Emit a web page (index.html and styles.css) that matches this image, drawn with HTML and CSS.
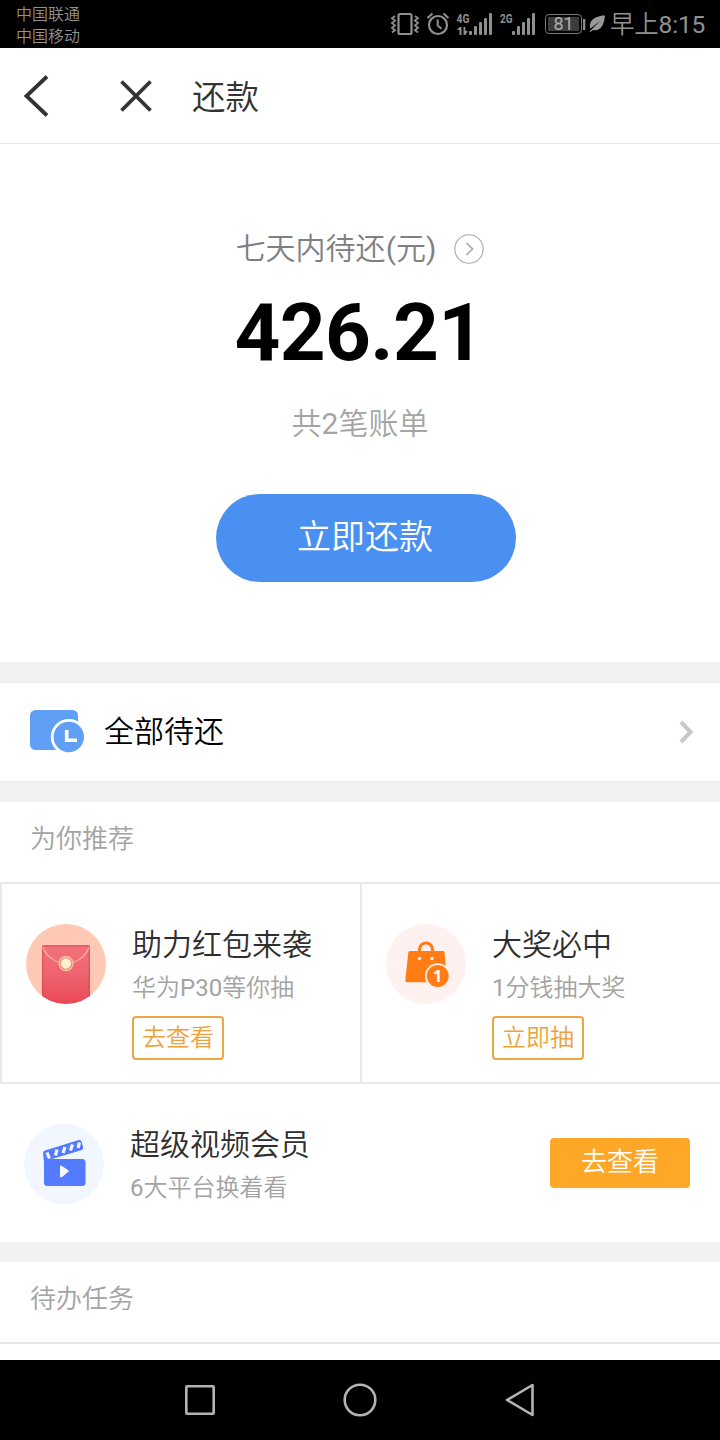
FILE: index.html
```html
<!DOCTYPE html>
<html lang="zh-CN">
<head>
<meta charset="utf-8">
<title>还款</title>
<link rel="stylesheet" href="styles.css">
</head>
<body>
<div class="phone">
  <div class="status">
    <div class="carriers"><span>中国联通</span><span>中国移动</span></div>
    <div class="indicators">
      <svg class="signals" width="150" height="48" viewBox="386 0 150 48" fill="none" stroke="#8f8f8f">
        <rect x="397.5" y="14" width="13" height="20" rx="1.5" stroke-width="2.200"/>
        <path d="M394 16l-3 2.2 3 2.4-3 2.4 3 2.4-3 2.4 3 2.4-3 2.2M414 16l3 2.2-3 2.4 3 2.4-3 2.4 3 2.4-3 2.4 3 2.2" stroke-width="1.8"/>
        <circle cx="437" cy="25" r="9" stroke-width="2.2"/>
        <path d="M436.7 19.5v6l3.8 3.3M426.5 18l5-4.6M447.5 18l-5-4.6" stroke-width="2"/>
        <g fill="#8f8f8f" stroke="none">
          <text class="net" x="455.5" y="23" textLength="13" lengthAdjust="spacingAndGlyphs">4G</text>
          <text class="net" x="499" y="23" textLength="12.5" lengthAdjust="spacingAndGlyphs">2G</text>
          <rect x="468" y="31" width="3" height="4" rx="1"/><rect x="473" y="26" width="3" height="9" rx="1"/><rect x="478" y="22" width="3" height="13" rx="1"/><rect x="483" y="18" width="3" height="17" rx="1"/><rect x="488" y="13" width="3" height="22" rx="1"/>
          <rect x="511" y="31" width="3" height="4" rx="1"/><rect x="516" y="26" width="3" height="9" rx="1"/><rect x="521" y="22" width="3" height="13" rx="1"/><rect x="526" y="18" width="3" height="17" rx="1"/><rect x="531" y="13" width="3" height="22" rx="1"/>
          <path d="M458.500 27h2v8h-2v-5h-2.500zM462.500 27h1.800v3.500l2.500 1-2.500 3.500h-1.800z"/>
        </g>
      </svg>
      <div class="battery"><span>81</span></div>
      <svg class="leaf" width="22" height="48" viewBox="583 0 22 48"><rect x="583" y="19" width="2.300" height="11" fill="#8f8f8f"/><path d="M605 15.500c-6 0-14 2.500-15 9-.2 1.500 0 3 .5 4l9.500-7.500-10.500 10.500 1 .5 2.500-2c7 1.500 11-4 12-14.500z" fill="#999"/></svg>
      <span class="time">早上<span class="latin">8:15</span></span>
    </div>
  </div>

  <header class="topbar">
    <svg width="192" height="95" viewBox="0 48 192 95" fill="none" stroke="#333" stroke-width="3.800"><path d="M47 76.500L26.500 96 47 115.500M121.500 81.500l29 29M150.500 81.500l-29 29"/></svg>
    <h1>还款</h1>
  </header>

  <section class="summary">
    <div class="due"><span>七天内待还<span class="latin">(</span>元<span class="latin">)</span></span>
      <svg width="30" height="30" viewBox="0 0 30 30" fill="none" stroke="#aaa"><circle cx="15" cy="15" r="14.200" stroke-width="1.100"/><path d="M12.500 9l6 6-6 6" stroke-width="1.700"/></svg>
    </div>
    <div class="amount">426.21</div>
    <div class="count">共<span class="latin">2</span>笔账单</div>
    <button class="pay">立即还款</button>
  </section>

  <div class="gap"></div>
  <section class="all">
    <svg width="55" height="44" viewBox="0 0 55 44"><rect width="48" height="40" rx="5.500" fill="#609ff6"/><circle cx="38.800" cy="27" r="18" fill="#fff"/><circle cx="38.800" cy="27" r="15.200" fill="#609ff6"/><path d="M36.700 20v10.200H47" fill="none" stroke="#fff" stroke-width="3.600"/></svg>
    <span>全部待还</span>
    <svg class="more" width="16" height="24" viewBox="0 0 16 24"><path d="M2 2l9.500 10L2 22" fill="none" stroke="#c7c7cb" stroke-width="4"/></svg>
  </section>
  <div class="gap"></div>

  <h2 class="section-title">为你推荐</h2>
  <section class="cards">
    <article class="card">
      <svg width="80" height="80" viewBox="0 0 80 80">
        <defs>
          <clipPath id="disc"><circle cx="40" cy="40" r="40"/></clipPath>
          <linearGradient id="red" x1="0" y1="0" x2="0" y2="1"><stop offset="0" stop-color="#f2727b"/><stop offset=".5" stop-color="#ee626e"/><stop offset="1" stop-color="#e94553"/></linearGradient>
        </defs>
        <circle cx="40" cy="40" r="40" fill="#ffc9b5"/>
        <g clip-path="url(#disc)"><rect x="16" y="21" width="48" height="62" rx="2" fill="url(#red)"/><path d="M16.500 22h47M16.800 22v58M63.200 22v58" stroke="#cf4855" stroke-width=".8"/></g>
        <path d="M17 23c3 10 14 16.500 23 16.500S60 33 63 23" fill="none" stroke="#f6ae9b" stroke-width="1.300"/>
        <circle cx="40" cy="39.500" r="7" fill="#ee8879" stroke="#f8c5a2" stroke-width="1.300"/><circle cx="40" cy="39.500" r="4.800" fill="#fff0d2" stroke="#ffe3ba"/>
      </svg>
      <div class="info"><h3>助力红包来袭</h3><p>华为<span class="latin">P30</span>等你抽</p><button class="outline">去查看</button></div>
    </article>
    <article class="card">
      <svg width="80" height="80" viewBox="0 0 80 80">
        <circle cx="40" cy="40" r="40" fill="#fff1ef"/>
        <path d="M33.500 29v-3.500a6.500 6.500 0 0 1 13 0V29" fill="none" stroke="#ff7d14" stroke-width="3.200"/>
        <path d="M24 27h33q1.500 0 1.600 1.500l2 28q.1 1.700-1.600 1.700H21q-1.800 0-1.700-1.700l3-28Q22.500 27 24 27z" fill="#ff7d14"/>
        <circle cx="33.500" cy="34.500" r="1.700" fill="#fff1ef"/><circle cx="46" cy="34.500" r="1.700" fill="#fff1ef"/>
        <circle cx="51.700" cy="52" r="12.700" fill="#fff1ef"/><circle cx="51.700" cy="52" r="11" fill="#ff7d14"/>
        <text class="badge" x="51.500" y="58" text-anchor="middle">1</text>
      </svg>
      <div class="info"><h3>大奖必中</h3><p><span class="latin">1</span>分钱抽大奖</p><button class="outline">立即抽</button></div>
    </article>
  </section>
  <article class="video">
    <svg width="80" height="80" viewBox="0 0 80 80">
      <circle cx="40" cy="40" r="40" fill="#f2f6ff"/>
      <path d="M20 35h38q3.500 0 3.500 3.500v20q0 3.500-3.500 3.500H23.500Q20 62 20 58.500z" fill="#547bff"/>
      <path d="M20 38l-1-9q0-2 2-2.500L54 16.200q3-.8 3.800 2L59 23q.6 2.500-2 3.200L28 35z" fill="#547bff"/>
      <path d="M23 28.500l2.500 6M33 25.500l-1.500 6M41 23l-2 6M48.500 20.500l-2 6M55.500 18.500l-1.500 5.500" stroke="#f2f6ff" stroke-width="3.200"/>
      <path d="M36 43q0-2.200 2-1l6.300 4.300q1 .7 0 1.500L38 53q-2 1.200-2-1z" fill="#f5f8ff"/>
    </svg>
    <div class="info"><h3>超级视频会员</h3><p><span class="latin">6</span>大平台换着看</p></div>
    <button class="solid">去查看</button>
  </article>
  <div class="gap"></div>
  <h2 class="section-title tasks">待办任务</h2>

  <nav class="navbar">
    <svg width="720" height="80" viewBox="0 0 720 80" fill="none" stroke="#b4b4b4" stroke-width="2.600" stroke-linejoin="round"><rect x="186.300" y="26.300" width="27.400" height="27.400" rx="1"/><circle cx="360" cy="40" r="15.300"/><path d="M532.500 25v30L507 40z"/></svg>
  </nav>
</div>
</body>
</html>
```

FILE: styles.css
```css
* { box-sizing: border-box; }
body { margin: 0; background: #fff; font-family: Roboto, "Noto Sans CJK SC", sans-serif; font-weight: 350; }
h1, h2, h3, p { margin: 0; font-weight: inherit; }
button { font: inherit; border: 0; padding: 0; display: block; }
svg { display: block; flex: none; }
.latin { font-weight: 400; }
.phone { width: 720px; height: 1440px; overflow: hidden; display: flex; flex-direction: column; background: #fff; }
.phone > * { flex: none; }

.status { height: 48px; background: #000; color: #919191; display: flex; justify-content: space-between; padding: 0 14px 0 16px; }
.carriers { display: flex; flex-direction: column; font-size: 16px; line-height: 22px; padding-top: 4px; }
.indicators { display: flex; align-items: center; }
.net { font: 700 13px Roboto, sans-serif; }
.battery { width: 37px; height: 20px; margin: 0 1px 0 8px; border: 1.500px solid #777; border-radius: 4px; padding: 2px; }
.battery span { display: block; height: 14px; background: #3c3c3c; color: #b0b0b0; font-size: 18px; font-weight: 400; line-height: 14px; text-align: center; }
.time { width: 96px; margin-left: 5px; font-size: 24.5px; line-height: 48px; letter-spacing: -.2px; white-space: nowrap; padding-top: 2px; }
.signals { margin-right: 0; }

.topbar { height: 96px; border-bottom: 1px solid #e5e8e8; display: flex; color: #333; }
.topbar h1 { font-size: 33.5px; line-height: 99px; }

.summary { height: 518px; display: flex; flex-direction: column; align-items: center; }
.due { margin-top: 84px; height: 42px; display: flex; align-items: center; gap: 18px; font-size: 30px; line-height: 42px; color: #808080; }
.amount { margin-top: 16px; height: 94px; font-size: 80px; line-height: 94px; font-weight: 700; letter-spacing: -.6px; padding-right: 2px; color: #000; }
.count { margin-top: 14px; height: 60px; font-size: 30px; line-height: 60px; color: #a5a5a5; margin-bottom: 40px; }
.pay { width: 300px; height: 88px; margin-left: 12px; border-radius: 44px; background: #4990f0; color: #fff; font-size: 34px; line-height: 84px; padding: 0 2px 2px 0; }

.gap { height: 20px; background: #f2f2f2; }
.all { height: 100px; border: solid #e8e9e9; border-width: 1px 0; display: flex; align-items: center; padding: 0 25px 0 30px; font-size: 30px; color: #000; }
.all span { margin-left: 19px; line-height: 98px; }
.more { margin-left: auto; }
.section-title { height: 80px; padding-left: 30px; font-size: 26px; line-height: 75px; color: #a3a3a3; }

.cards { height: 202px; display: grid; grid-template-columns: 360px 360px; border: solid #e6e9ea; border-width: 2px 0; }
.card { border-left: 2px solid #e6e9ea; display: flex; padding: 40px 0 0 24px; }
.info { margin-left: 26px; }
.info h3 { font-size: 30px; line-height: 42px; color: #2e2e2e; }
.info p { font-size: 24px; line-height: 34px; margin-top: 5px; color: #a3a3a3; }
.outline { width: 92px; height: 44px; margin-top: 11px; border: 2px solid #eca744; border-radius: 4px; background: #fff; color: #eda23a; font-size: 24px; line-height: 40px; }
.badge { font: 700 16px "Open Sans", sans-serif; fill: #fff; }
.video { height: 158px; display: flex; padding: 40px 30px 0 24px; }
.solid { width: 140px; height: 50px; margin: 14px 0 0 auto; border-radius: 4px; background: #ffa827; color: #fff; font-size: 26px; line-height: 46px; padding-bottom: 2px; }
.tasks { height: 82px; border-bottom: 2px solid #e6e9ea; }
.navbar { height: 80px; margin-top: auto; background: #000; }
```
